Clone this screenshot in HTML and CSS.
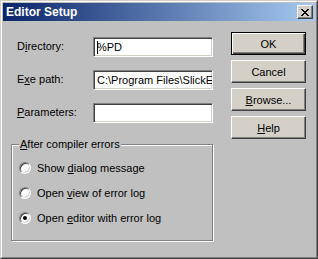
FILE: index.html
```html
<!DOCTYPE html>
<html lang="en">
<head>
    <meta charset="UTF-8">
    <title>Editor Setup</title>
    <link rel="stylesheet" href="styles.css">
</head>
<body>
    <div class="window">
        <div class="frame">
            <!-- Title bar -->
            <div class="titlebar">
                <span class="title">Editor Setup</span>
                <div class="close-btn">
                    <svg width="8" height="7" viewBox="0 0 8 7" shape-rendering="crispEdges">
                        <rect x="0" y="0" width="2" height="1"/><rect x="6" y="0" width="2" height="1"/>
                        <rect x="1" y="1" width="2" height="1"/><rect x="5" y="1" width="2" height="1"/>
                        <rect x="2" y="2" width="4" height="1"/>
                        <rect x="3" y="3" width="2" height="1"/>
                        <rect x="2" y="4" width="4" height="1"/>
                        <rect x="1" y="5" width="2" height="1"/><rect x="5" y="5" width="2" height="1"/>
                        <rect x="0" y="6" width="2" height="1"/><rect x="6" y="6" width="2" height="1"/>
                    </svg>
                </div>
            </div>

            <!-- Dialog content -->
            <div class="dialog">
                <div class="left-col">
                    <div class="field-row">
                        <label class="field-label">D<u>i</u>rectory:</label>
                        <div class="edit"><span class="caret"></span>%PD</div>
                    </div>
                    <div class="field-row">
                        <label class="field-label">E<u>x</u>e path:</label>
                        <div class="edit">C:\Program Files\SlickE</div>
                    </div>
                    <div class="field-row">
                        <label class="field-label"><u>P</u>arameters:</label>
                        <div class="edit"></div>
                    </div>

                    <div class="group">
                        <span class="group-label"><u>A</u>fter compiler errors</span>
                        <div class="radio-row">
                            <span class="radio"></span>
                            <span>Show <u>d</u>ialog message</span>
                        </div>
                        <div class="radio-row">
                            <span class="radio"></span>
                            <span>Open <u>v</u>iew of error log</span>
                        </div>
                        <div class="radio-row">
                            <span class="radio checked"></span>
                            <span>Open <u>e</u>ditor with error log</span>
                        </div>
                    </div>
                </div>

                <div class="right-col">
                    <div class="btn default"><span>OK</span></div>
                    <div class="btn"><span>Cancel</span></div>
                    <div class="btn"><span><u>B</u>rowse...</span></div>
                    <div class="btn"><span><u>H</u>elp</span></div>
                </div>
            </div>
        </div>
    </div>
</body>
</html>
```

FILE: styles.css
```css
* {
    margin: 0;
    padding: 0;
    box-sizing: border-box;
}

body {
    font-family: "Liberation Sans", Arial, sans-serif;
    font-size: 11px;
    color: #000;
    background: #c0c0c0;
}

u {
    text-decoration: underline;
    text-underline-offset: 1px;
}

.window {
    width: 318px;
    height: 259px;
    border: 1px solid;
    border-color: #d4d0c8 #404040 #404040 #d4d0c8;
    background: #c0c0c0;
}

.frame {
    height: 100%;
    border: 1px solid;
    border-color: #fff #808080 #808080 #fff;
    padding: 1px;
    display: flex;
    flex-direction: column;
}

/* Title bar */
.titlebar {
    height: 18px;
    background: linear-gradient(90deg, #0a246a, #a6caf0);
    display: flex;
    align-items: center;
    justify-content: space-between;
    padding: 0 2px 0 3px;
}

.title {
    color: #fff;
    font-weight: bold;
    font-size: 12px;
}

.close-btn {
    width: 16px;
    height: 14px;
    background: #d4d0c8;
    border: 1px solid;
    border-color: #fff #404040 #404040 #fff;
    box-shadow: inset -1px -1px 0 #808080;
    display: flex;
    align-items: center;
    justify-content: center;
    padding-right: 1px;
}

/* Dialog body */
.dialog {
    flex: 1;
    display: flex;
    padding: 11px 0 0 8px;
    gap: 18px;
}

.left-col {
    width: 202px;
    padding-top: 5px;
}

.field-row {
    display: flex;
    align-items: center;
    height: 20px;
    margin-bottom: 13px;
}

.field-row:nth-child(3) {
    margin-bottom: 0;
}

.field-label {
    width: 82px;
    padding-left: 6px;
    padding-bottom: 2px;
}

.edit {
    width: 120px;
    height: 20px;
    background: #fff;
    border: 1px solid;
    border-color: #808080 #fff #fff #808080;
    box-shadow: inset 1px 1px 0 #404040, inset -1px -1px 0 #d4d0c8;
    padding: 3px 0 0 3px;
    white-space: nowrap;
    overflow: hidden;
    line-height: 13px;
}

.caret {
    display: inline-block;
    width: 1px;
    height: 13px;
    background: #000;
    vertical-align: top;
    margin-right: -1px;
}

/* Group box */
.group {
    margin-top: 21px;
    height: 97px;
    border: 1px solid #808080;
    box-shadow: inset 1px 1px 0 #fff, 1px 1px 0 #fff;
    padding: 0 7px;
}

.group-label {
    display: block;
    width: max-content;
    margin-top: -7px;
    padding: 0 1px;
    line-height: 13px;
    background: #c0c0c0;
}

.radio-row {
    display: flex;
    align-items: center;
    gap: 6px;
    height: 25px;
}

.radio-row:first-of-type {
    margin-top: 4px;
}

.radio {
    width: 12px;
    height: 12px;
    border-radius: 50%;
    border: 1px solid;
    border-color: #808080 #fff #fff #808080;
    background: #fff;
    box-shadow: inset 1px 1px 0 #404040, inset -1px -1px 0 #d4d0c8;
    display: flex;
    align-items: center;
    justify-content: center;
}

.radio.checked::after {
    content: "";
    width: 4px;
    height: 4px;
    border-radius: 50%;
    background: #000;
}

/* Buttons */
.right-col {
    display: flex;
    flex-direction: column;
    gap: 5px;
}

.btn {
    width: 75px;
    height: 23px;
    background: #d4d0c8;
    border: 1px solid;
    border-color: #fff #404040 #404040 #fff;
    box-shadow: inset -1px -1px 0 #808080;
    display: flex;
    align-items: center;
    justify-content: center;
}

.btn.default {
    border: 1px solid #000;
    box-shadow: inset 1px 1px 0 #fff, inset -1px -1px 0 #404040, inset -2px -2px 0 #808080;
}
```
